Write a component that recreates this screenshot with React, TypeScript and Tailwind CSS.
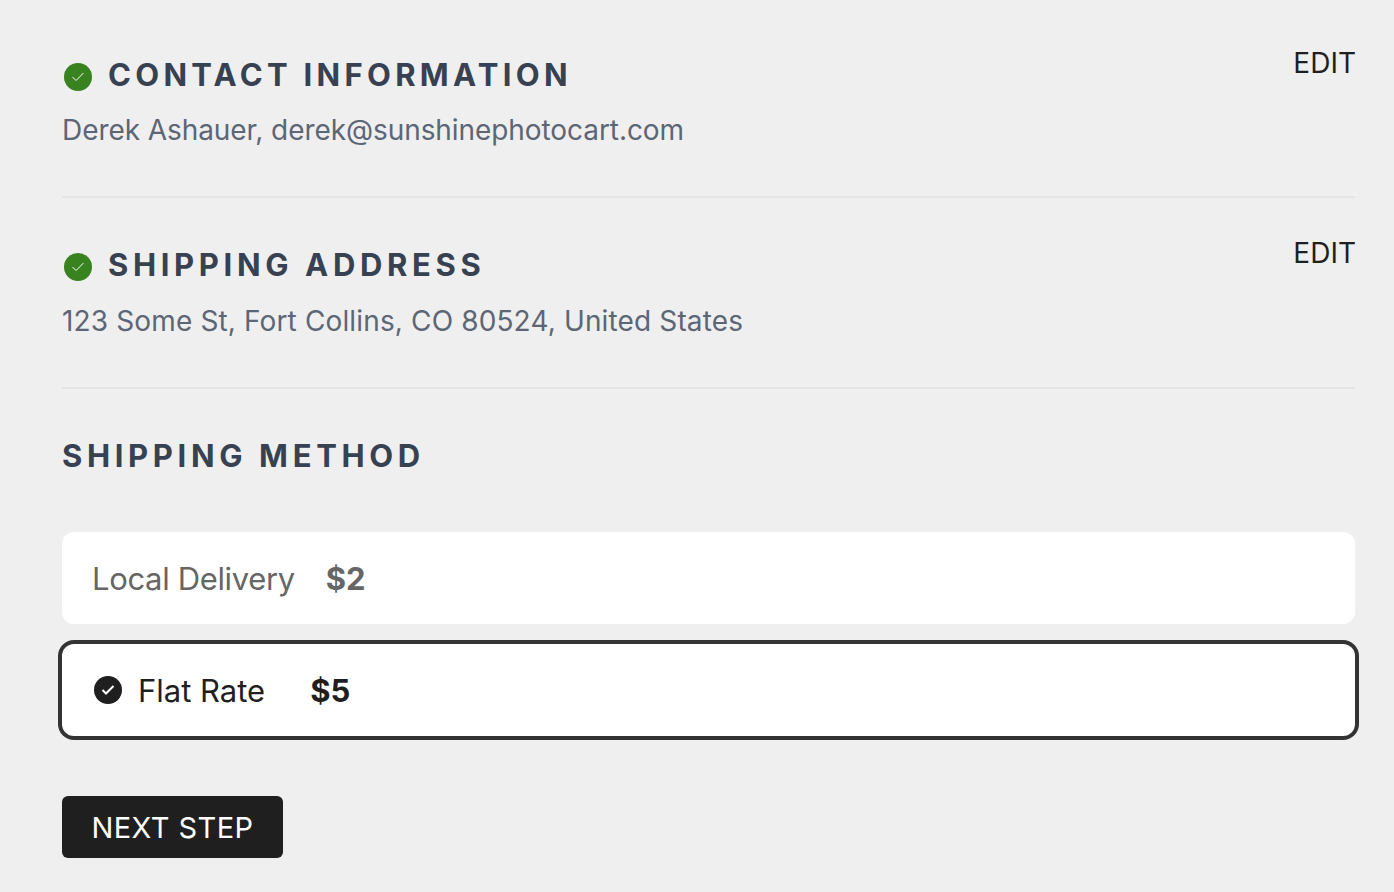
const CheckBadge = ({ bg, size, stroke }: { bg: string; size: string; stroke: number }) => (
  <span className={`flex shrink-0 items-center justify-center rounded-full ${bg} ${size}`}>
    <svg viewBox="0 0 16 16" className="h-4 w-4" fill="none" stroke="white" strokeWidth={stroke}>
      <path d="M2.5 8 L6 11.5 L13.5 4" />
    </svg>
  </span>
);

const Section = ({
  title,
  detail,
  titleTracking,
  detailTracking,
  pad,
  detailGap,
  editTop,
}: {
  title: string;
  detail: string;
  titleTracking: string;
  detailTracking: string;
  pad: string;
  detailGap: string;
  editTop: string;
}) => (
  <div className={`relative h-[191px] border-b-2 border-[#e4e4e4] ${pad}`}>
    <div className="flex items-center">
      <span className="mt-1 ml-[2px]">
        <CheckBadge bg="bg-[#38821f]" size="h-[28px] w-[28px]" stroke={1} />
      </span>
      <h2 className={`ml-4 text-[31px] leading-[38px] font-bold text-[#374151] ${titleTracking}`}>{title}</h2>
    </div>
    <p className={`text-[28px] leading-[40px] text-[#5c6675] ${detailGap} ${detailTracking}`}>{detail}</p>
    <button className={`absolute right-[-1px] text-[28px] leading-[34px] text-[#1f1f1f] ${editTop}`}>EDIT</button>
  </div>
);

export default function App() {
  return (
    <div className="h-[892px] overflow-hidden bg-[#efefef] pt-[7px] pr-[39px] pl-[62px] font-['Inter',sans-serif]">
      <Section
        title="CONTACT INFORMATION"
        detail="Derek Ashauer, derek@sunshinephotocart.com"
        titleTracking="tracking-[4.3px]"
        detailTracking="tracking-[-0.07px]"
        pad="pt-[49px]"
        detailGap="mt-[16px]"
        editTop="top-[39px]"
      />
      <Section
        title="SHIPPING ADDRESS"
        detail="123 Some St, Fort Collins, CO 80524, United States"
        titleTracking="tracking-[4.65px]"
        detailTracking="tracking-[0.14px]"
        pad="pt-[48px]"
        detailGap="mt-[17px]"
        editTop="top-[38px]"
      />
      <h2 className="mt-[48px] text-[31px] leading-[38px] font-bold tracking-[4.65px] text-[#374151]">SHIPPING METHOD</h2>
      <div className="mt-[57px] flex h-[92px] items-center gap-[31px] rounded-xl bg-white pt-[2px] pl-[30px] text-[31px] text-[#666666]">
        <span className="tracking-[-0.35px]">Local Delivery</span>
        <span className="font-bold">$2</span>
      </div>
      <div className="mt-[20px] flex h-[92px] items-center rounded-xl bg-white pl-[32px] text-[31px] text-[#1f1f1f] ring-4 ring-[#333333]">
        <CheckBadge bg="bg-[#1f1f1f]" size="h-[28px] w-[28px]" stroke={2} />
        <span className="ml-[16px] pt-[2px]">Flat Rate</span>
        <span className="ml-[45px] pt-[2px] font-bold">$5</span>
      </div>
      <button className="mt-[60px] h-[62px] w-[221px] rounded-md bg-[#1f1f1f] pt-[2px] text-[29px] tracking-[0.45px] text-white">
        NEXT STEP
      </button>
    </div>
  );
}
